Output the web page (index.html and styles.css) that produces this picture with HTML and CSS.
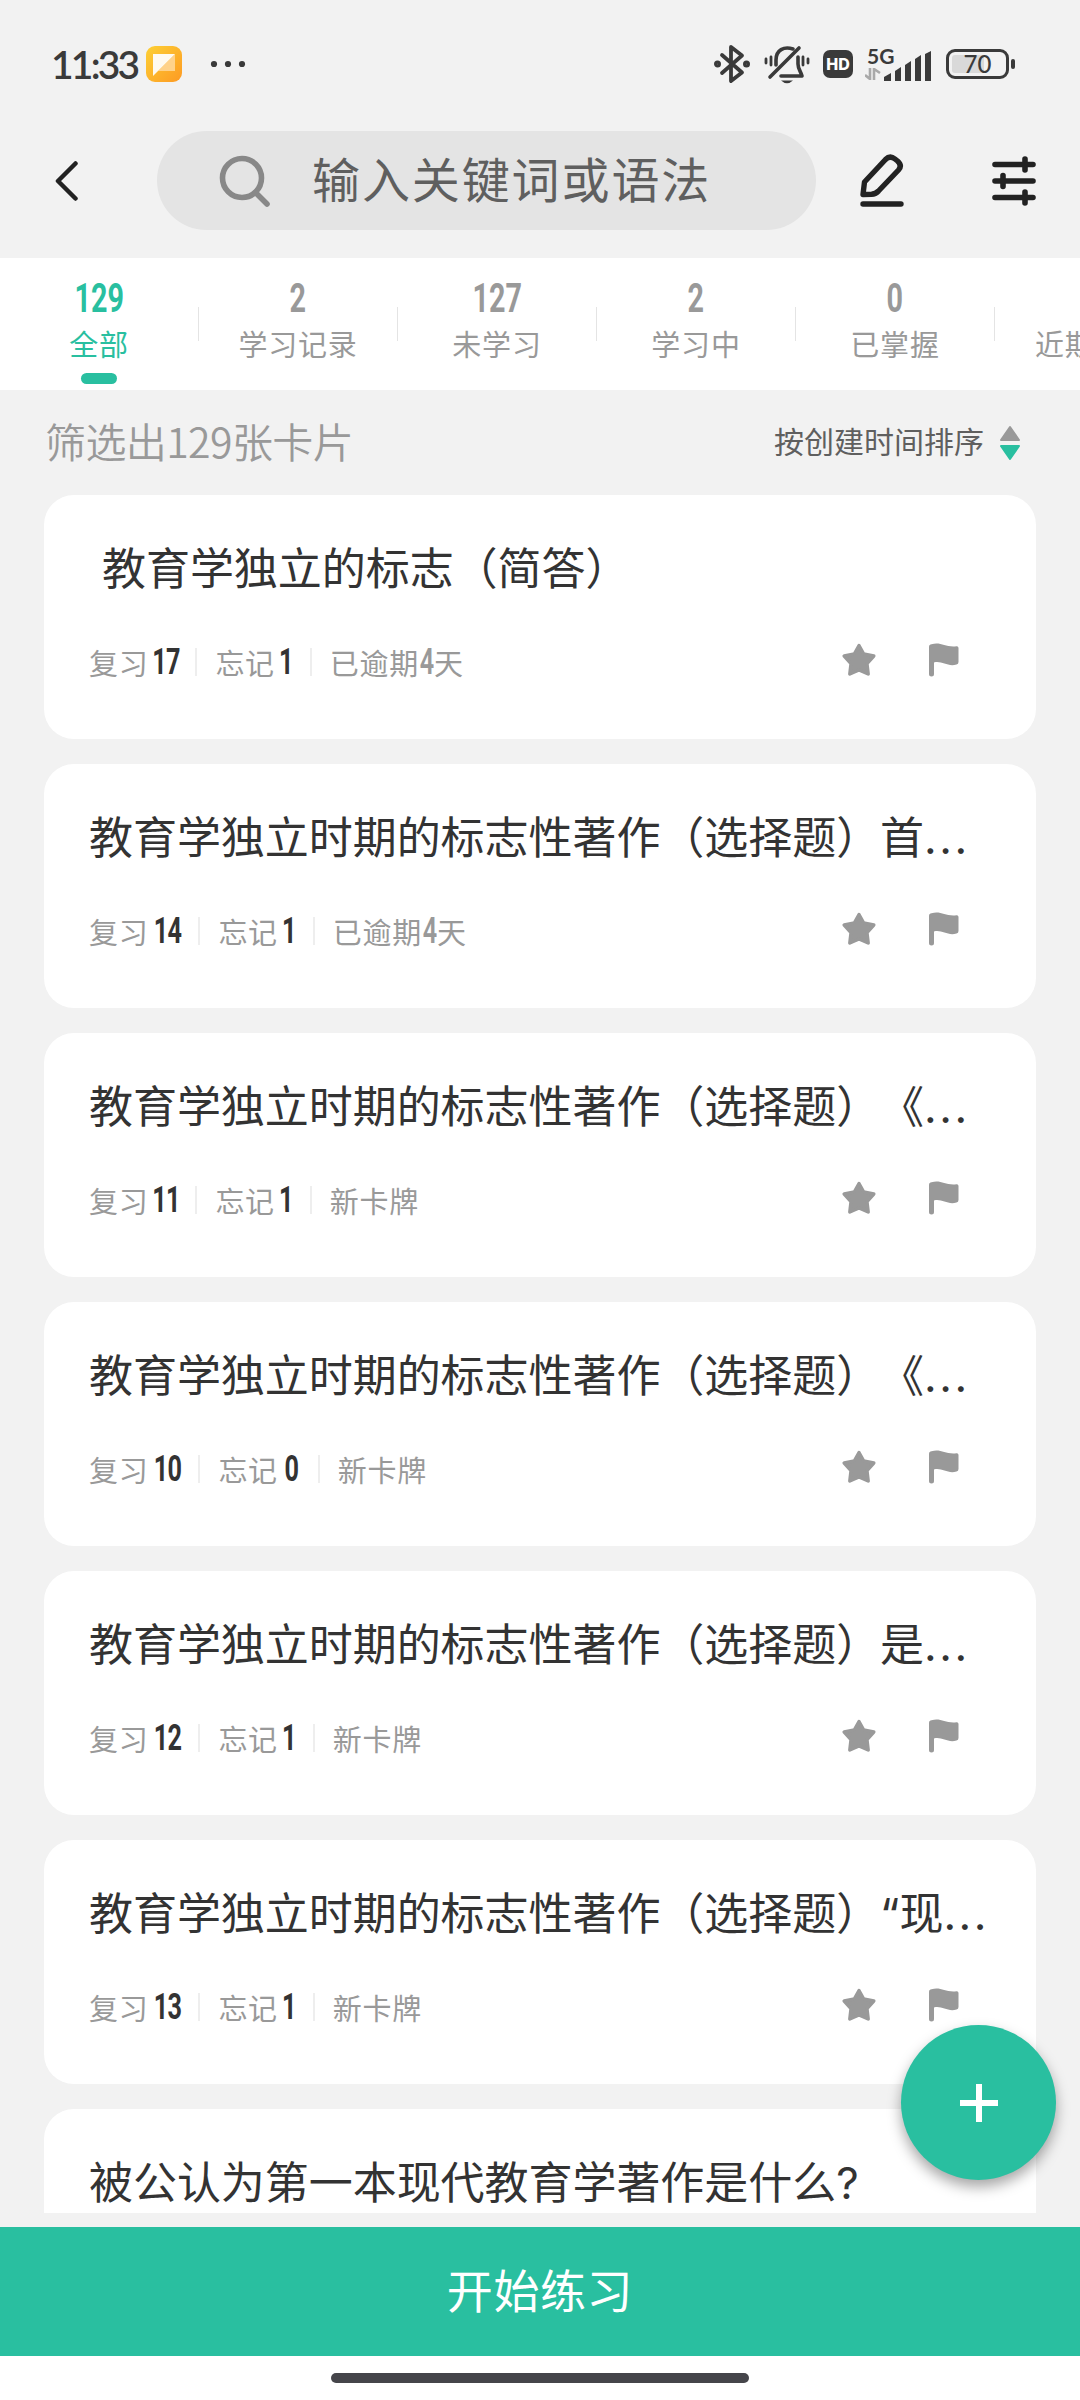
FILE: index.html
```html
<!DOCTYPE html>
<html lang="zh-CN">
<head>
  <meta charset="UTF-8">
  <meta name="viewport" content="width=device-width, initial-scale=1.0">
  <title>卡片列表</title>
  <link rel="stylesheet" href="styles.css">
</head>
<body>
  <!-- shared icons -->
  <svg class="sprite">
    <symbol id="star" viewBox="0 0 34 34">
      <path d="M17 2.500 L21.600 10.800 L31.800 13 L25 20.600 L26.200 31 L17 27 L7.800 31 L9 20.600 L2.200 13 L12.400 10.800 Z" fill="#999" stroke="#999" stroke-width="3.400" stroke-linejoin="round"/>
    </symbol>
    <symbol id="flag" viewBox="0 0 30 34">
      <path d="M0 4 C0 2 1 1.500 2.500 1.200 C12 -1.500 16 4.500 27.500 3.200 Q29.500 3 29.500 5 V19 Q29.500 21 27.500 21.600 C18 24 13 17.500 5 19.500 V31 A2.500 2.500 0 0 1 0 31 Z" fill="#999"/>
    </symbol>
  </svg>

  <header class="status-bar">
    <span class="time">11:33</span>
    <svg class="app-icon" width="36" height="36" viewBox="0 0 36 36">
      <defs>
        <linearGradient id="sun" x1="0" y1="0" x2="1" y2="1">
          <stop offset="0" stop-color="#fdd035"/>
          <stop offset="1" stop-color="#fd9a23"/>
        </linearGradient>
      </defs>
      <rect width="36" height="36" rx="9" fill="url(#sun)"/>
      <path d="M29 8 V25 H12 Z" fill="#ffd28a"/>
      <path d="M7 8 H29 L7 30 Z" fill="#fffaf0"/>
    </svg>
    <svg class="dots" width="36" height="8" viewBox="0 0 36 8" fill="#3a3a3a">
      <circle cx="4" cy="4" r="3.100"/><circle cx="18" cy="4" r="3.100"/><circle cx="32" cy="4" r="3.100"/>
    </svg>

    <div class="status-icons">
      <svg width="38" height="40" viewBox="0 0 38 40" fill="none" stroke="#3a3a3a" stroke-width="3.800" stroke-linejoin="round" stroke-linecap="round">
        <path d="M9 11 L29 28.500 L18 37 V3 L29 11.500 L9 29"/>
        <circle cx="4.500" cy="20" r="1.600"/><circle cx="33.500" cy="20" r="1.600"/>
      </svg>
      <svg class="bell" width="46" height="40" viewBox="0 0 46 40" fill="none" stroke="#3a3a3a" stroke-width="3.600" stroke-linecap="round">
        <path d="M6 33 L35 4"/>
        <path d="M12 21 V16 C12 6 20 2 29 5"/>
        <path d="M34 13 V20 C34 25 37 28 38 32 H17" stroke-linejoin="round"/>
        <path d="M17 36.500 H29 Q23 42 17 36.500 Z" fill="#3a3a3a" stroke="none"/>
        <path d="M2 15 V19 M7 13 V21 M39 13 V21 M44 15 V19" stroke-width="2.800"/>
      </svg>
      <span class="hd">HD</span>
      <div class="signal">
        <div class="net">
          <span>5G</span>
          <svg width="16" height="12" viewBox="0 0 16 12" fill="none" stroke="#a9a9a9" stroke-width="2.600">
            <path d="M0 7 L5 11 V0 M9 12 V1 L15 5"/>
          </svg>
        </div>
        <svg width="48" height="30" viewBox="0 0 48 30" fill="#3a3a3a">
          <path d="M0 30 V26 L7 22 V30 Z M11 30 V20 L17 16 V30 Z M21 30 V14 L27 10 V30 Z M31 30 V8 L37 4 V30 Z M41 30 V3 L47 0 V30 Z"/>
        </svg>
      </div>
      <div class="battery"><span>70</span></div>
    </div>
  </header>

  <nav class="top-bar">
    <svg class="back" width="24" height="42" viewBox="0 0 24 42">
      <path d="M20.500 3.500 L3 21 L20.500 38.500" fill="none" stroke="#222" stroke-width="4.500" stroke-linecap="round" stroke-linejoin="round"/>
    </svg>
    <div class="search">
      <svg width="52" height="52" viewBox="0 0 52 52" fill="none" stroke="#888" stroke-width="5.600" stroke-linecap="round">
        <circle cx="23" cy="23" r="19.500"/><path d="M36.500 37.500 L48 49"/>
      </svg>
      <span>输入关键词或语法</span>
    </div>
    <svg class="edit" width="44" height="54" viewBox="0 0 44 54" fill="none" stroke="#222" stroke-width="5.400" stroke-linecap="round" stroke-linejoin="round">
      <path d="M3 40.500 L4.500 28 L25.500 5.500 Q30 1 35 5 L37.500 7 Q42.500 11.500 38.500 16 L18.500 37 Q15.500 40 11.500 40.300 Z"/>
      <path d="M3 50 H41"/>
    </svg>
    <svg class="filter" width="44" height="52" viewBox="0 0 44 52" fill="none" stroke="#222" stroke-width="5.600" stroke-linecap="round">
      <path d="M3 9.500 H41 M3 26 H41 M3 42.500 H41 M33 4 V15 M11 20.500 V31.500 M33 37 V48"/>
    </svg>
  </nav>

  <div class="tabs">
    <div class="tab active"><b>129</b><span>全部</span></div>
    <div class="tab"><b>2</b><span>学习记录</span></div>
    <div class="tab"><b>127</b><span>未学习</span></div>
    <div class="tab"><b>2</b><span>学习中</span></div>
    <div class="tab"><b>0</b><span>已掌握</span></div>
    <div class="tab cut"><span>近期</span></div>
  </div>

  <div class="summary">
    <span class="count">筛选出129张卡片</span>
    <span class="sort">按创建时间排序</span>
    <svg width="20" height="36" viewBox="0 0 20 36" stroke-width="2" stroke-linejoin="round">
      <path d="M10 2 L19 15 H1 Z" fill="#999" stroke="#999"/>
      <path d="M1 21 H19 L10 34 Z" fill="#29bfa0" stroke="#29bfa0"/>
    </svg>
  </div>

  <main class="list">
    <div class="card">
      <div class="title indent">教育学独立的标志（简答）</div>
      <div class="meta">
        <span>复习</span><b class="num w3">17</b><i></i><span>忘记</span><b class="num w1">1</b><i></i><span>已逾期</span><b class="num gray">4</b><span>天</span>
        <svg class="star"><use href="#star"/></svg><svg class="flag"><use href="#flag"/></svg>
      </div>
    </div>
    <div class="card">
      <div class="title">教育学独立时期的标志性著作（选择题）首<em>...</em></div>
      <div class="meta">
        <span>复习</span><b class="num w4">14</b><i></i><span>忘记</span><b class="num w1">1</b><i></i><span>已逾期</span><b class="num gray">4</b><span>天</span>
        <svg class="star"><use href="#star"/></svg><svg class="flag"><use href="#flag"/></svg>
      </div>
    </div>
    <div class="card">
      <div class="title">教育学独立时期的标志性著作（选择题）《<em>...</em></div>
      <div class="meta">
        <span>复习</span><b class="num w3">11</b><i></i><span>忘记</span><b class="num w1">1</b><i></i><span>新卡牌</span>
        <svg class="star"><use href="#star"/></svg><svg class="flag"><use href="#flag"/></svg>
      </div>
    </div>
    <div class="card">
      <div class="title">教育学独立时期的标志性著作（选择题）《<em>...</em></div>
      <div class="meta">
        <span>复习</span><b class="num w4">10</b><i></i><span>忘记</span><b class="num w2">0</b><i></i><span>新卡牌</span>
        <svg class="star"><use href="#star"/></svg><svg class="flag"><use href="#flag"/></svg>
      </div>
    </div>
    <div class="card">
      <div class="title">教育学独立时期的标志性著作（选择题）是<em>...</em></div>
      <div class="meta">
        <span>复习</span><b class="num w4">12</b><i></i><span>忘记</span><b class="num w1">1</b><i></i><span>新卡牌</span>
        <svg class="star"><use href="#star"/></svg><svg class="flag"><use href="#flag"/></svg>
      </div>
    </div>
    <div class="card">
      <div class="title">教育学独立时期的标志性著作（选择题）<q>“</q>现<em>...</em></div>
      <div class="meta">
        <span>复习</span><b class="num w4">13</b><i></i><span>忘记</span><b class="num w1">1</b><i></i><span>新卡牌</span>
        <svg class="star"><use href="#star"/></svg><svg class="flag"><use href="#flag"/></svg>
      </div>
    </div>
    <div class="card">
      <div class="title">被公认为第一本现代教育学著作是什么<q>?</q></div>
    </div>
  </main>

  <button class="fab">
    <svg width="40" height="40" viewBox="0 0 40 40"><path d="M20 1 V39 M1 20 H39" stroke="#fff" stroke-width="6"/></svg>
  </button>

  <button class="start">开始练习</button>
  <footer class="home"><div class="home-bar"></div></footer>
</body>
</html>
```

FILE: styles.css
```css
* {
  box-sizing: border-box;
}

body {
  display: flex;
  flex-direction: column;
  width: 1080px;
  height: 2400px;
  margin: 0;
  overflow: hidden;
  position: relative;
  background-color: #f2f2f2;
  color: #333;
  font-family: "Noto Sans CJK SC", sans-serif;
  text-spacing-trim: space-all;
}

svg {
  display: block;
  flex: none;
}

button {
  border: none;
  padding: 0;
  font-family: inherit;
}

.sprite {
  display: none;
}

/* status bar */
.status-bar {
  display: flex;
  align-items: center;
  height: 128px;
  padding: 0 64px 0 51px;
  color: #3a3a3a;
}

.time {
  width: 95px;
  font-family: Lato, sans-serif;
  font-size: 39px;
  font-weight: 600;
  letter-spacing: -2.800px;
  white-space: nowrap;
}

.dots {
  margin-left: 28px;
}

.status-icons {
  display: flex;
  align-items: center;
  margin-left: auto;
}

.bell {
  margin: 0 13px;
}

.hd {
  width: 30px;
  height: 28px;
  border-radius: 7px;
  background-color: #3a3a3a;
  color: #fff;
  font: 800 16px/28px Inter, sans-serif;
  text-align: center;
}

.signal {
  display: flex;
  align-items: flex-end;
  width: 67px;
  height: 34px;
  margin: 0 14px 0 12px;
}

.net {
  width: 19px;
  flex: none;
}

.net span {
  display: block;
  margin-left: 2px;
  font: 700 21px/18px Lato, sans-serif;
  white-space: nowrap;
}

.net svg {
  margin: 3px 0 1px;
}

.battery {
  display: flex;
  align-items: center;
  width: 70px;
}

.battery span {
  width: 63px;
  height: 30px;
  border: 3px solid #3a3a3a;
  border-radius: 9px;
  box-shadow: inset 0 0 0 3px #f2f2f2;
  background: linear-gradient(90deg, #d9d9d9 62%, #f2f2f2 62%);
  font: 500 24px/24px Lato, sans-serif;
  text-align: center;
}

.battery::after {
  content: "";
  width: 4px;
  height: 10px;
  margin-left: 2px;
  border-radius: 2px;
  background-color: #3a3a3a;
}

/* search */
.top-bar {
  display: flex;
  align-items: center;
  height: 130px;
  padding: 0 44px 25px 55px;
}

.search {
  display: flex;
  align-items: center;
  width: 659px;
  height: 99px;
  margin-left: 78px;
  padding-left: 62px;
  border-radius: 50px;
  background-color: #e4e4e4;
}

.search span {
  margin-left: 41px;
  padding-bottom: 7px;
  color: #5f5f5f;
  font-size: 48px;
  line-height: 86px;
  letter-spacing: 1.900px;
}

.edit {
  margin-left: 44px;
}

.filter {
  margin-left: auto;
}

/* tabs */
.tabs {
  display: flex;
  height: 132px;
  background-color: #fff;
  overflow: hidden;
}

.tab {
  display: flex;
  flex-direction: column;
  align-items: center;
  flex: none;
  width: 199px;
  padding: 19px 1px 0 0;
  color: #999;
  background: linear-gradient(#e4e4e4, #e4e4e4) right 49px / 1px 34px no-repeat;
}

.tab b,
.num {
  font-family: Roboto, sans-serif;
  font-weight: 700;
  transform: scaleX(0.7);
}

.tab b {
  height: 41px;
  font-size: 41px;
  line-height: 42px;
}

.tab span {
  height: 50px;
  font-size: 29px;
  line-height: 51px;
  letter-spacing: 0.8px;
}

.tab.cut {
  align-items: flex-start;
  padding: 60px 0 0 40px;
}

.tab.active {
  color: #29bfa0;
}

.tab.active::after {
  content: "";
  width: 36px;
  height: 11px;
  margin-top: 5px;
  border-radius: 6px;
  background-color: #29bfa0;
}

.summary {
  display: flex;
  align-items: center;
  flex: none;
  height: 105px;
  padding: 0 60px 0 45px;
}

.count {
  padding-bottom: 6px;
  color: #999;
  font-size: 41px;
  font-weight: 350;
  letter-spacing: -0.6px;
}

.sort {
  margin: 0 16px 0 auto;
  padding-bottom: 5px;
  color: #5f5f5f;
  font-size: 30px;
}

/* cards */
.list {
  display: flex;
  flex-direction: column;
  gap: 25px;
  height: 1718px;
  padding: 0 44px;
  overflow: hidden;
}

.card {
  flex: none;
  height: 244px;
  padding: 39px 44px 0 45px;
  border-radius: 30px;
  background-color: #fff;
}

.title {
  height: 64px;
  font-size: 44px;
  line-height: 64px;
  letter-spacing: -0.050px;
  white-space: nowrap;
}

.title.indent {
  padding-left: 13px;
}

.title em {
  font-family: Inter, sans-serif;
  font-style: normal;
  letter-spacing: 2.500px;
}

.title q {
  quotes: none;
  font-family: Inter, sans-serif;
}

.meta {
  display: flex;
  align-items: center;
  height: 40px;
  margin-top: 44px;
  color: #999;
  font-size: 29px;
  letter-spacing: 0.7px;
}

.meta i {
  width: 2px;
  height: 28px;
  margin: 0 18px 0 17.500px;
  background-color: #eee;
}

.num {
  display: flex;
  justify-content: center;
  margin-left: 5.500px;
  color: #333;
  font-size: 36px;
  letter-spacing: -1px;
}

.num.gray {
  width: 15px;
  margin: 0;
  color: #999;
  font-weight: 600;
}

.w1 {
  width: 12px;
}

.w2 {
  width: 17px;
}

.w3 {
  width: 24px;
}

.w4 {
  width: 27px;
}

.star {
  width: 34px;
  height: 34px;
  margin: -5px 53px 0 auto;
}

.flag {
  width: 30px;
  height: 34px;
  margin: -4px 33px 0 0;
}

/* bottom */
.fab {
  display: flex;
  align-items: center;
  justify-content: center;
  position: absolute;
  left: 901px;
  top: 2025px;
  width: 155px;
  height: 155px;
  border-radius: 50%;
  background-color: #29bfa0;
  box-shadow: 0 7px 14px rgba(0, 0, 0, 0.35);
}

.start {
  flex: none;
  height: 129px;
  margin-top: 14px;
  padding-bottom: 7px;
  background-color: #29bfa0;
  color: #fff;
  font-size: 46px;
  letter-spacing: 0.6px;
}

.home {
  display: flex;
  justify-content: center;
  height: 44px;
  padding-top: 17px;
  background-color: #fff;
}

.home-bar {
  width: 418px;
  height: 10px;
  border-radius: 5px;
  background-color: #45454a;
}
```
